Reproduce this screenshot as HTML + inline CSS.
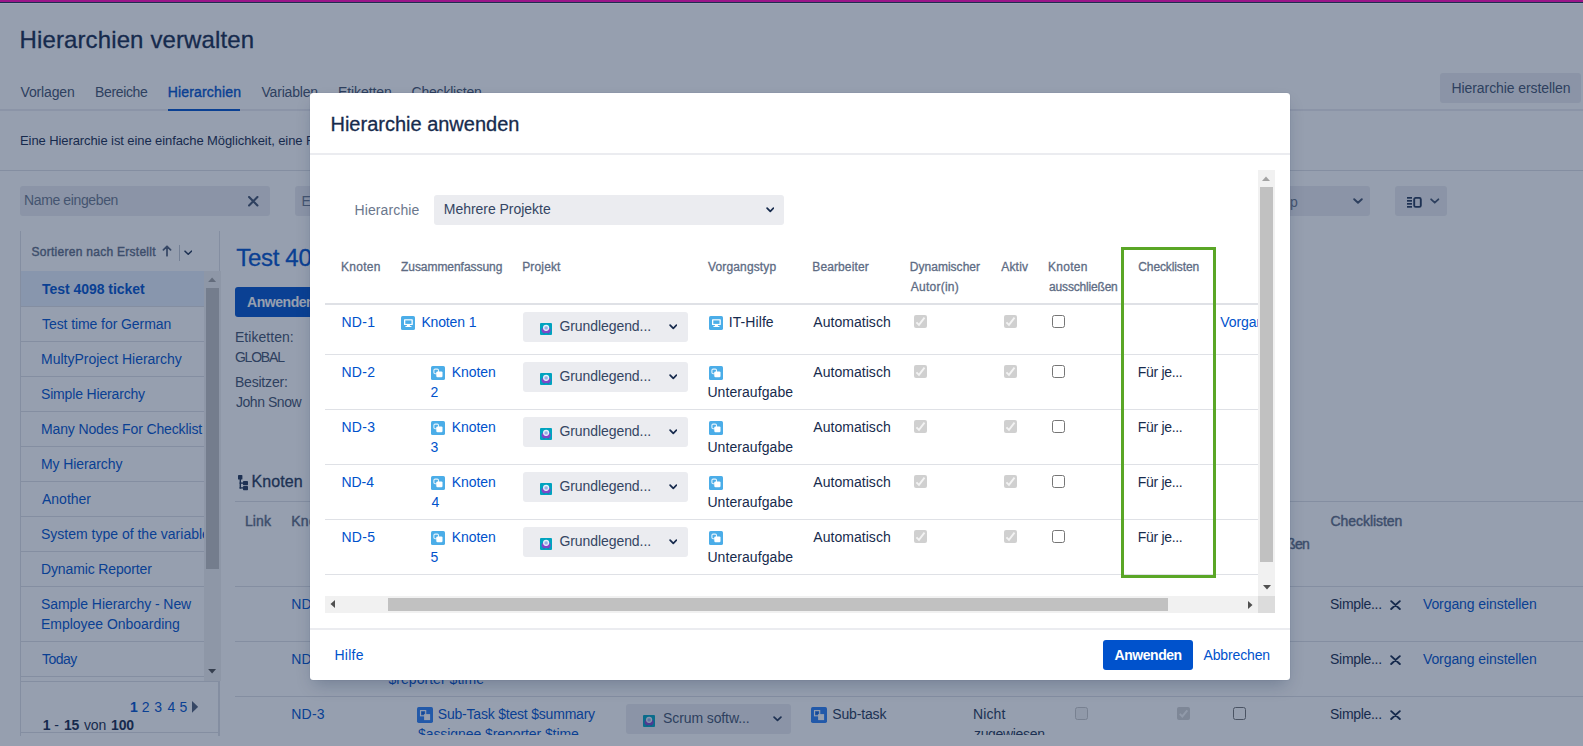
<!DOCTYPE html>
<html lang="de"><head><meta charset="utf-8"><title>Hierarchien verwalten</title>
<style>
html,body{margin:0;padding:0}
body{width:1583px;height:746px;overflow:hidden;position:relative;background:#fff;font-family:"Liberation Sans",Arial,sans-serif;}
.a{position:absolute;box-sizing:border-box}
.t{position:absolute;white-space:nowrap;line-height:20px}
.layer{position:absolute;left:0;top:0;width:1583px;height:746px;overflow:hidden}
#blanket{background:rgba(23,43,77,0.45)}
#modal{position:absolute;left:310px;top:93px;width:980px;height:587px;background:#fff;border-radius:3px;box-shadow:0 8px 16px -4px rgba(9,30,66,.25),0 0 1px rgba(9,30,66,.31)}
#mscroll{position:absolute;left:15px;top:77px;width:933px;height:426px;overflow:hidden}
</style></head><body>
<div class="layer" id="app" role="main"><span class="t" style="left:19.50px;top:30px;font-size:24px;color:#172b4d;-webkit-text-stroke:0.30px;letter-spacing:0.125px;">Hierarchien verwalten</span><span class="t" style="left:20.50px;top:82px;font-size:14px;color:#42526e;letter-spacing:-0.143px;">Vorlagen</span><span class="t" style="left:95.00px;top:82px;font-size:14px;color:#42526e;letter-spacing:-0.357px;">Bereiche</span><span class="t" style="left:167.70px;top:82px;font-size:14px;color:#0052cc;-webkit-text-stroke:0.40px;letter-spacing:0.170px;">Hierarchien</span><span class="t" style="left:261.50px;top:82px;font-size:14px;color:#42526e;letter-spacing:-0.188px;">Variablen</span><span class="t" style="left:337.90px;top:82px;font-size:14px;color:#42526e;letter-spacing:-0.062px;">Etiketten</span><span class="t" style="left:411.50px;top:82px;font-size:14px;color:#42526e;letter-spacing:-0.200px;">Checklisten</span><div class="a" style="left:0px;top:109px;width:1583px;height:2px;background:#ebecf0;"></div><div class="a" style="left:168px;top:109px;width:72px;height:2px;background:#0052cc;"></div><div class="a" style="left:1440px;top:73px;width:141px;height:30px;background:#ebecf0;border-radius:3px;"></div><span class="t" style="left:1451.50px;top:78px;font-size:14px;color:#42526e;letter-spacing:-0.079px;">Hierarchie erstellen</span><span class="t" style="left:20.00px;top:131px;font-size:13px;color:#172b4d;letter-spacing:-0.087px;">Eine Hierarchie ist eine einfache Möglichkeit, eine F</span><div class="a" style="left:0px;top:170px;width:1583px;height:1px;background:#dfe1e6;"></div><div class="a" style="left:20px;top:186px;width:250px;height:30px;background:#ebecf0;border-radius:3px;"></div><span class="t" style="left:24.00px;top:190px;font-size:14px;color:#6b778c;letter-spacing:-0.375px;">Name eingeben</span><div class="a" style="left:295px;top:186px;width:200px;height:30px;background:#ebecf0;border-radius:3px;"></div><span class="t" style="left:301.50px;top:191px;font-size:14px;color:#6b778c;">Etikett</span><div class="a" style="left:1170px;top:186px;width:200px;height:30px;background:#ebecf0;border-radius:3px;"></div><span class="t" style="left:1290.00px;top:192px;font-size:14px;color:#6b778c;">p</span><div class="a" style="left:1395px;top:186px;width:52px;height:30px;background:#ebecf0;border-radius:3px;"></div><svg class="a" style="left:248px;top:196px" width="10.5" height="10.5" viewBox="0 0 10 10"><path d="M1 1 L9 9 M9 1 L1 9" stroke="#42526e" stroke-width="2" fill="none" stroke-linecap="round"/></svg><svg class="a" style="left:1352.5px;top:198px" width="10" height="6" viewBox="0 0 10 6"><path d="M1.2 1.2 L5 4.8 L8.8 1.2" stroke="#42526e" stroke-width="1.9" fill="none" stroke-linecap="round" stroke-linejoin="round"/></svg><svg class="a" style="left:1430px;top:198px" width="9.5" height="6" viewBox="0 0 10 6"><path d="M1.2 1.2 L5 4.8 L8.8 1.2" stroke="#42526e" stroke-width="1.9" fill="none" stroke-linecap="round" stroke-linejoin="round"/></svg><svg class="a" style="left:1406.5px;top:195.5px" width="16" height="13" viewBox="0 0 16 13"><g fill="#253858"><rect x="0" y="1" width="5" height="1.7"/><rect x="0" y="4" width="5" height="1.7"/><rect x="0" y="7" width="5" height="1.7"/><rect x="0" y="10" width="5" height="1.7"/></g><rect x="7.2" y="1.9" width="6.6" height="9" rx="1.5" fill="none" stroke="#253858" stroke-width="1.9"/></svg><div class="a" style="left:20px;top:231px;width:200px;height:505px;border-left:1px solid #dfe1e6;border-right:1px solid #dfe1e6;"></div><span class="t" style="left:31.50px;top:242px;font-size:12px;color:#5e6c84;-webkit-text-stroke:0.40px;letter-spacing:0.273px;">Sortieren nach Erstellt</span><svg class="a" style="left:162px;top:245.4px" width="10" height="11.6" viewBox="0 0 10 12"><path d="M5 11 V1.5 M1.3 5 L5 1.3 L8.7 5" stroke="#505f79" stroke-width="1.8" fill="none" stroke-linecap="round" stroke-linejoin="round"/></svg><div class="a" style="left:179px;top:245px;width:1px;height:16px;background:#c1c7d0;"></div><svg class="a" style="left:183.5px;top:249.5px" width="8.5" height="5.5" viewBox="0 0 10 6"><path d="M1.2 1.2 L5 4.8 L8.8 1.2" stroke="#253858" stroke-width="1.9" fill="none" stroke-linecap="round" stroke-linejoin="round"/></svg><div class="a" style="left:21px;top:271px;width:183px;height:35px;background:#e6eefb;"></div><span class="t" style="left:42.00px;top:279px;font-size:14px;color:#0052cc;font-weight:700;letter-spacing:-0.033px;">Test 4098 ticket</span><div class="a" style="left:21px;top:306px;width:183px;height:1px;background:#dfe1e6;"></div><span class="t" style="left:42.00px;top:314px;font-size:14px;color:#0052cc;letter-spacing:-0.079px;">Test time for German</span><div class="a" style="left:21px;top:341px;width:183px;height:1px;background:#dfe1e6;"></div><span class="t" style="left:41.00px;top:349px;font-size:14px;color:#0052cc;">MultyProject Hierarchy</span><div class="a" style="left:21px;top:376px;width:183px;height:1px;background:#dfe1e6;"></div><span class="t" style="left:41.00px;top:384px;font-size:14px;color:#0052cc;letter-spacing:-0.167px;">Simple Hierarchy</span><div class="a" style="left:21px;top:411px;width:183px;height:1px;background:#dfe1e6;"></div><span class="t" style="left:41.00px;top:419px;font-size:14px;color:#0052cc;letter-spacing:-0.130px;">Many Nodes For Checklist</span><div class="a" style="left:21px;top:446px;width:183px;height:1px;background:#dfe1e6;"></div><span class="t" style="left:41.00px;top:454px;font-size:14px;color:#0052cc;letter-spacing:-0.091px;">My Hierarchy</span><div class="a" style="left:21px;top:481px;width:183px;height:1px;background:#dfe1e6;"></div><span class="t" style="left:42.00px;top:489px;font-size:14px;color:#0052cc;">Another</span><div class="a" style="left:21px;top:516px;width:183px;height:1px;background:#dfe1e6;"></div><span class="t" style="left:41.00px;top:524px;font-size:14px;color:#0052cc;">System type of the variable</span><div class="a" style="left:21px;top:551px;width:183px;height:1px;background:#dfe1e6;"></div><span class="t" style="left:41.00px;top:559px;font-size:14px;color:#0052cc;letter-spacing:-0.133px;">Dynamic Reporter</span><div class="a" style="left:21px;top:586px;width:183px;height:1px;background:#dfe1e6;"></div><span class="t" style="left:41.00px;top:594px;font-size:14px;color:#0052cc;letter-spacing:-0.071px;">Sample Hierarchy - New</span><span class="t" style="left:41.00px;top:614px;font-size:14px;color:#0052cc;letter-spacing:-0.028px;">Employee Onboarding</span><div class="a" style="left:21px;top:641px;width:183px;height:1px;background:#dfe1e6;"></div><span class="t" style="left:42.00px;top:649px;font-size:14px;color:#0052cc;letter-spacing:-0.500px;">Today</span><div class="a" style="left:21px;top:676px;width:183px;height:1px;background:#dfe1e6;"></div><div class="a" style="left:204px;top:516px;width:2px;height:35px;background:#fff;"></div><div class="a" style="left:204px;top:271px;width:16.6px;height:410px;background:#f1f1f1;"></div><div class="a" style="left:206px;top:288px;width:13px;height:281px;background:#c1c1c1;"></div><svg class="a" style="left:208.4px;top:277.4px" width="8.2" height="5" viewBox="0 0 8 5"><path d="M0 5 L4 0.5 L8 5 Z" fill="#a3a3a3"/></svg><svg class="a" style="left:208.4px;top:669.3px" width="8.2" height="5" viewBox="0 0 8 5"><path d="M0 0 L4 4.5 L8 0 Z" fill="#505050"/></svg><div class="a" style="left:20px;top:681px;width:199px;height:52px;border:1px solid #dfe1e6;"></div><div class="a" style="left:20px;top:733px;width:199px;height:3px;border-left:1px solid #dfe1e6;border-right:1px solid #dfe1e6;"></div><span class="t" style="left:130.00px;top:697px;font-size:14px;color:#0052cc;font-weight:700;">1</span><span class="t" style="left:141.80px;top:697px;font-size:14px;color:#0052cc;">2</span><span class="t" style="left:154.20px;top:697px;font-size:14px;color:#0052cc;">3</span><span class="t" style="left:167.50px;top:697px;font-size:14px;color:#0052cc;">4</span><span class="t" style="left:179.60px;top:697px;font-size:14px;color:#0052cc;">5</span><svg class="a" style="left:192px;top:701px" width="6.2" height="11.8" viewBox="0 0 6 11.5"><path d="M0 0 L6 5.75 L0 11.5 Z" fill="#505f79"/></svg><span class="t" style="left:42.70px;top:715px;font-size:14px;color:#172b4d;font-weight:700;">1</span><span class="t" style="left:54.30px;top:715px;font-size:14px;color:#172b4d;">-</span><span class="t" style="left:63.90px;top:715px;font-size:14px;color:#172b4d;font-weight:700;letter-spacing:-0.300px;">15</span><span class="t" style="left:83.90px;top:715px;font-size:14px;color:#172b4d;letter-spacing:-0.050px;">von</span><span class="t" style="left:111.00px;top:715px;font-size:14px;color:#172b4d;font-weight:700;letter-spacing:-0.100px;">100</span><span class="t" style="left:236.20px;top:248px;font-size:24px;color:#0052cc;-webkit-text-stroke:0.30px;letter-spacing:-0.3px;">Test 4098 ticket</span><div class="a" style="left:235px;top:287px;width:92px;height:30px;background:#0052cc;border-radius:3px;"></div><span class="t" style="left:247.10px;top:292px;font-size:14px;color:#fff;font-weight:700;letter-spacing:-0.471px;">Anwenden</span><span class="t" style="left:234.90px;top:327px;font-size:14px;color:#42526e;letter-spacing:0.056px;">Etiketten:</span><span class="t" style="left:234.90px;top:347px;font-size:14px;color:#42526e;letter-spacing:-1.200px;">GLOBAL</span><span class="t" style="left:234.90px;top:372px;font-size:14px;color:#42526e;letter-spacing:-0.188px;">Besitzer:</span><span class="t" style="left:235.90px;top:392px;font-size:14px;color:#42526e;letter-spacing:-0.438px;">John Snow</span><svg class="a" style="left:238px;top:475.4px" width="10" height="15.2" viewBox="0 0 10 15.2"><g fill="#253858"><rect x="0" y="0" width="4.4" height="4.6" rx="0.7"/><rect x="1.6" y="4" width="1.4" height="9.6"/><rect x="1.6" y="7.4" width="4" height="1.4"/><rect x="1.6" y="12.2" width="4" height="1.4"/><rect x="5" y="6" width="5" height="4.2" rx="0.7"/><rect x="5" y="11" width="5" height="4.2" rx="0.7"/></g></svg><span class="t" style="left:251.50px;top:472px;font-size:16px;color:#253858;-webkit-text-stroke:0.30px;letter-spacing:0.100px;">Knoten</span><div class="a" style="left:235px;top:501px;width:1348px;height:1px;background:#dfe1e6;"></div><div class="a" style="left:235px;top:586px;width:1348px;height:1px;background:#dfe1e6;"></div><div class="a" style="left:235px;top:641px;width:1348px;height:1px;background:#dfe1e6;"></div><div class="a" style="left:235px;top:696px;width:1348px;height:1px;background:#dfe1e6;"></div><span class="t" style="left:244.90px;top:511px;font-size:14px;color:#5e6c84;-webkit-text-stroke:0.44px;letter-spacing:0.167px;">Link</span><span class="t" style="left:291.20px;top:511px;font-size:14px;color:#5e6c84;-webkit-text-stroke:0.44px;letter-spacing:0.300px;">Knoten</span><span class="t" style="left:291.20px;top:594px;font-size:14px;color:#0052cc;letter-spacing:0.267px;">ND-1</span><span class="t" style="left:291.20px;top:649px;font-size:14px;color:#0052cc;letter-spacing:0.267px;">ND-2</span><span class="t" style="left:291.20px;top:704px;font-size:14px;color:#0052cc;letter-spacing:0.267px;">ND-3</span><span class="t" style="left:1330.50px;top:511px;font-size:14px;color:#5e6c84;-webkit-text-stroke:0.44px;letter-spacing:-0.050px;">Checklisten</span><span class="t" style="left:1234.90px;top:534px;font-size:14px;color:#5e6c84;-webkit-text-stroke:0.44px;letter-spacing:-0.682px;">ausschließen</span><span class="t" style="left:1330.10px;top:594px;font-size:14px;color:#172b4d;letter-spacing:-0.312px;">Simple...</span><svg class="a" style="left:1390.3px;top:599.7px" width="11" height="10.2" viewBox="0 0 12 11"><path d="M1.3 1.2 L10.7 9.8 M10.7 1.2 L1.3 9.8" stroke="#172b4d" stroke-width="2.1" fill="none" stroke-linecap="round"/></svg><span class="t" style="left:1422.90px;top:594px;font-size:14px;color:#0052cc;letter-spacing:-0.076px;">Vorgang einstellen</span><span class="t" style="left:1330.10px;top:649px;font-size:14px;color:#172b4d;letter-spacing:-0.312px;">Simple...</span><svg class="a" style="left:1390.3px;top:654.7px" width="11" height="10.2" viewBox="0 0 12 11"><path d="M1.3 1.2 L10.7 9.8 M10.7 1.2 L1.3 9.8" stroke="#172b4d" stroke-width="2.1" fill="none" stroke-linecap="round"/></svg><span class="t" style="left:1422.90px;top:649px;font-size:14px;color:#0052cc;letter-spacing:-0.076px;">Vorgang einstellen</span><span class="t" style="left:1330.10px;top:704px;font-size:14px;color:#172b4d;letter-spacing:-0.312px;">Simple...</span><svg class="a" style="left:1390.3px;top:709.7px" width="11" height="10.2" viewBox="0 0 12 11"><path d="M1.3 1.2 L10.7 9.8 M10.7 1.2 L1.3 9.8" stroke="#172b4d" stroke-width="2.1" fill="none" stroke-linecap="round"/></svg><span class="t" style="left:388.50px;top:669px;font-size:14px;color:#0052cc;letter-spacing:0.036px;">$reporter $time</span><svg class="a" style="left:417px;top:707px" width="16" height="16" viewBox="0 0 16 16"><rect width="16" height="16" rx="1.7" fill="#2d80f5"/><rect x="3.5" y="3.6" width="5.2" height="5.2" fill="#2d80f5" stroke="#fff" stroke-width="1.1"/><circle cx="6" cy="6.1" r="1.3" fill="#1c62c9"/><rect x="7.1" y="7.1" width="6" height="6" fill="#fff"/></svg><span class="t" style="left:437.80px;top:704px;font-size:14px;color:#0052cc;letter-spacing:-0.205px;">Sub-Task $test $summary</span><span class="t" style="left:418.00px;top:724px;font-size:14px;color:#0052cc;letter-spacing:-0.075px;">$assignee $reporter $time</span><div class="a" style="left:626px;top:704px;width:165px;height:30px;background:#ebecf0;border-radius:3px;"></div><svg class="a" style="left:643px;top:715px" width="12" height="12" viewBox="0 0 12 12"><rect width="12" height="12" rx="1" fill="#00a3bf"/><rect x="3.3" y="9.3" width="1.4" height="1.2" fill="#5e35a8"/><rect x="7.5" y="9.3" width="1.4" height="1.2" fill="#5e35a8"/><rect x="1.6" y="4.4" width="9" height="5.5" rx="2.75" fill="#7f48c8"/><circle cx="6.1" cy="4.8" r="3.1" fill="#eaf1fb"/><circle cx="6.1" cy="4.9" r="1.9" fill="#a9c0ec"/><rect x="5" y="4.6" width="2.2" height="0.8" fill="#7f9ad8"/></svg><span class="t" style="left:663.00px;top:708px;font-size:14px;color:#42526e;letter-spacing:-0.100px;">Scrum softw...</span><svg class="a" style="left:773px;top:716px" width="9" height="5.6" viewBox="0 0 10 6"><path d="M1.2 1.2 L5 4.8 L8.8 1.2" stroke="#253858" stroke-width="1.9" fill="none" stroke-linecap="round" stroke-linejoin="round"/></svg><svg class="a" style="left:811px;top:707px" width="16" height="16" viewBox="0 0 16 16"><rect width="16" height="16" rx="1.7" fill="#2d80f5"/><rect x="3.5" y="3.6" width="5.2" height="5.2" fill="#2d80f5" stroke="#fff" stroke-width="1.1"/><circle cx="6" cy="6.1" r="1.3" fill="#1c62c9"/><rect x="7.1" y="7.1" width="6" height="6" fill="#fff"/></svg><span class="t" style="left:832.20px;top:704px;font-size:14px;color:#253858;letter-spacing:-0.143px;">Sub-task</span><span class="t" style="left:973.00px;top:704px;font-size:14px;color:#253858;letter-spacing:0.125px;">Nicht</span><span class="t" style="left:974.00px;top:724px;font-size:14px;color:#253858;letter-spacing:-0.333px;">zugewiesen</span><div class="a" style="left:1075px;top:707px;width:13px;height:13px;border:1px solid #c8c8c8;border-radius:2.5px;background:#f4f4f4"></div><svg class="a" style="left:1177px;top:707px" width="13" height="13" viewBox="0 0 13 13"><rect width="13" height="13" rx="2" fill="#d3d3d3"/><path d="M2.8 6.9 L5.3 9.4 L10.3 3.4" stroke="#f6f6f6" stroke-width="2" fill="none"/></svg><div class="a" style="left:1233px;top:707px;width:13px;height:13px;border:1px solid #767676;border-radius:2.5px;background:#fff"></div><div class="a" style="left:220px;top:735px;width:1363px;height:11px;background:#fff;"></div><div class="a" style="left:0px;top:736px;width:20px;height:10px;background:#fff;"></div></div>
<div class="layer" id="blanket"></div>
<div id="modal" role="dialog" aria-label="Hierarchie anwenden"><span class="t" style="left:20.50px;top:21px;font-size:20px;color:#172b4d;-webkit-text-stroke:0.30px;letter-spacing:-0.006px;">Hierarchie anwenden</span><div class="a" style="left:0px;top:60px;width:980px;height:2px;background:#ebecf0;"></div><div class="a" style="left:0px;top:535px;width:980px;height:2px;background:#ebecf0;"></div><span class="t" style="left:24.50px;top:552px;font-size:14px;color:#0052cc;letter-spacing:0.250px;">Hilfe</span><div class="a" style="left:793px;top:547px;width:90px;height:30px;background:#0052cc;border-radius:3px;"></div><span class="t" style="left:804.60px;top:552px;font-size:14px;color:#fff;font-weight:700;letter-spacing:-0.471px;">Anwenden</span><span class="t" style="left:893.50px;top:552px;font-size:14px;color:#0052cc;letter-spacing:-0.137px;">Abbrechen</span><div class="a" style="left:948px;top:77px;width:17px;height:426px;background:#f1f1f1;"></div><div class="a" style="left:950px;top:94px;width:13px;height:375px;background:#c1c1c1;"></div><svg class="a" style="left:952.2px;top:82.7px" width="8" height="5" viewBox="0 0 8 5"><path d="M0 5 L4 0.5 L8 5 Z" fill="#a3a3a3"/></svg><svg class="a" style="left:952.5px;top:491.5px" width="8" height="5" viewBox="0 0 8 5"><path d="M0 0 L4 4.5 L8 0 Z" fill="#505050"/></svg><div class="a" style="left:15px;top:503px;width:933px;height:17px;background:#f1f1f1;"></div><div class="a" style="left:948px;top:503px;width:17px;height:17px;background:#dcdcdc;"></div><div class="a" style="left:78px;top:505px;width:780px;height:13px;background:#c1c1c1;"></div><svg class="a" style="left:19.8px;top:507.3px" width="5" height="8" viewBox="0 0 5 8"><path d="M5 0 L0.5 4 L5 8 Z" fill="#505050"/></svg><svg class="a" style="left:937.5px;top:507.5px" width="5" height="8" viewBox="0 0 5 8"><path d="M0 0 L4.5 4 L0 8 Z" fill="#505050"/></svg><div id="mscroll"><span class="t" style="left:29.40px;top:30px;font-size:14px;color:#6b778c;letter-spacing:0.133px;">Hierarchie</span><div class="a" style="left:109px;top:25px;width:350px;height:30px;background:#ebecf0;border-radius:3px;"></div><span class="t" style="left:118.80px;top:29px;font-size:14px;color:#344563;letter-spacing:-0.033px;">Mehrere Projekte</span><svg class="a" style="left:440.7px;top:37.2px" width="8.6" height="5.6" viewBox="0 0 8.6 5.6"><path d="M1.1 1.1 L4.3 4.3 L7.5 1.1" stroke="#172b4d" stroke-width="1.75" fill="none" stroke-linecap="round" stroke-linejoin="round"/></svg><span class="t" style="left:15.90px;top:87px;font-size:12px;color:#5e6c84;-webkit-text-stroke:0.30px;letter-spacing:0.300px;">Knoten</span><span class="t" style="left:76.00px;top:87px;font-size:12px;color:#5e6c84;-webkit-text-stroke:0.30px;letter-spacing:-0.050px;">Zusammenfassung</span><span class="t" style="left:197.20px;top:87px;font-size:12px;color:#5e6c84;-webkit-text-stroke:0.30px;letter-spacing:0.150px;">Projekt</span><span class="t" style="left:383.10px;top:87px;font-size:12px;color:#5e6c84;-webkit-text-stroke:0.30px;letter-spacing:0.130px;">Vorgangstyp</span><span class="t" style="left:487.30px;top:87px;font-size:12px;color:#5e6c84;-webkit-text-stroke:0.30px;letter-spacing:0.111px;">Bearbeiter</span><span class="t" style="left:584.80px;top:87px;font-size:12px;color:#5e6c84;-webkit-text-stroke:0.30px;letter-spacing:0.020px;">Dynamischer</span><span class="t" style="left:676.20px;top:87px;font-size:12px;color:#5e6c84;-webkit-text-stroke:0.30px;letter-spacing:0.200px;">Aktiv</span><span class="t" style="left:723.10px;top:87px;font-size:12px;color:#5e6c84;-webkit-text-stroke:0.30px;letter-spacing:0.240px;">Knoten</span><span class="t" style="left:813.30px;top:87px;font-size:12px;color:#5e6c84;-webkit-text-stroke:0.30px;letter-spacing:-0.110px;">Checklisten</span><span class="t" style="left:585.80px;top:107px;font-size:12px;color:#5e6c84;-webkit-text-stroke:0.30px;letter-spacing:0.237px;">Autor(in)</span><span class="t" style="left:724.10px;top:107px;font-size:12px;color:#5e6c84;-webkit-text-stroke:0.30px;letter-spacing:-0.182px;">ausschließen</span><div class="a" style="left:0px;top:133px;width:940px;height:2px;background:#dfe1e6;"></div><span class="t" style="left:16.40px;top:142px;font-size:14px;color:#0052cc;letter-spacing:0.300px;">ND-1</span><svg class="a" style="left:76px;top:146px" width="14" height="14" viewBox="0 0 14 14"><rect width="14" height="14" rx="1.6" fill="#4bade8"/><rect x="3" y="3.3" width="8.8" height="5.8" rx="0.6" fill="#fff"/><rect x="4.3" y="4.4" width="6.2" height="3.5" fill="#4bade8"/><rect x="5.9" y="9" width="3" height="1.1" fill="#fff"/><rect x="4.4" y="10" width="6.1" height="1.1" rx="0.3" fill="#fff"/></svg><span class="t" style="left:96.40px;top:142px;font-size:14px;color:#0052cc;letter-spacing:-0.143px;">Knoten 1</span><svg class="a" style="left:384px;top:146px" width="14" height="14" viewBox="0 0 14 14"><rect width="14" height="14" rx="1.6" fill="#4bade8"/><rect x="3" y="3.3" width="8.8" height="5.8" rx="0.6" fill="#fff"/><rect x="4.3" y="4.4" width="6.2" height="3.5" fill="#4bade8"/><rect x="5.9" y="9" width="3" height="1.1" fill="#fff"/><rect x="4.4" y="10" width="6.1" height="1.1" rx="0.3" fill="#fff"/></svg><span class="t" style="left:403.80px;top:142px;font-size:14px;color:#172b4d;letter-spacing:0.071px;">IT-Hilfe</span><span class="t" style="left:895.30px;top:142px;font-size:14px;color:#0052cc;letter-spacing:-0.076px;">Vorgang einstellen</span><div class="a" style="left:198px;top:142px;width:165px;height:30px;background:#ebecf0;border-radius:3px;"></div><svg class="a" style="left:215px;top:153px" width="12" height="12" viewBox="0 0 12 12"><rect width="12" height="12" rx="1" fill="#00a3bf"/><rect x="3.3" y="9.3" width="1.4" height="1.2" fill="#5e35a8"/><rect x="7.5" y="9.3" width="1.4" height="1.2" fill="#5e35a8"/><rect x="1.6" y="4.4" width="9" height="5.5" rx="2.75" fill="#7f48c8"/><circle cx="6.1" cy="4.8" r="3.1" fill="#eaf1fb"/><circle cx="6.1" cy="4.9" r="1.9" fill="#a9c0ec"/><rect x="5" y="4.6" width="2.2" height="0.8" fill="#7f9ad8"/></svg><span class="t" style="left:234.40px;top:146px;font-size:14px;color:#344563;letter-spacing:-0.069px;">Grundlegend...</span><svg class="a" style="left:343.8px;top:154px" width="8.6" height="5.6" viewBox="0 0 8.6 5.6"><path d="M1.1 1.1 L4.3 4.3 L7.5 1.1" stroke="#172b4d" stroke-width="1.75" fill="none" stroke-linecap="round" stroke-linejoin="round"/></svg><span class="t" style="left:488.30px;top:142px;font-size:14px;color:#172b4d;letter-spacing:0.040px;">Automatisch</span><svg class="a" style="left:589px;top:145px" width="13" height="13" viewBox="0 0 13 13"><rect width="13" height="13" rx="2" fill="#d0d0d0"/><path d="M2.4 7.4 L5 9.9 L10.5 2.7" stroke="#f3f3f3" stroke-width="1.9" fill="none"/></svg><svg class="a" style="left:679px;top:145px" width="13" height="13" viewBox="0 0 13 13"><rect width="13" height="13" rx="2" fill="#d0d0d0"/><path d="M2.4 7.4 L5 9.9 L10.5 2.7" stroke="#f3f3f3" stroke-width="1.9" fill="none"/></svg><div class="a" style="left:727px;top:145px;width:13px;height:13px;border:1px solid #767676;border-radius:2.5px;background:#fff"></div><div class="a" style="left:0px;top:184px;width:940px;height:1px;background:#dfe1e6;"></div><span class="t" style="left:16.40px;top:192px;font-size:14px;color:#0052cc;letter-spacing:0.300px;">ND-2</span><svg class="a" style="left:106px;top:196px" width="14" height="14" viewBox="0 0 14 14"><rect width="14" height="14" rx="1.6" fill="#4bade8"/><rect x="2.9" y="3.1" width="4.6" height="4.6" rx="1.2" fill="none" stroke="#fff" stroke-width="1.1" opacity=".85"/><rect x="5.3" y="5.4" width="6.2" height="5.9" rx="1.2" fill="#fff"/></svg><span class="t" style="left:126.70px;top:192px;font-size:14px;color:#0052cc;letter-spacing:-0.040px;">Knoten</span><span class="t" style="left:105.50px;top:212px;font-size:14px;color:#0052cc;">2</span><svg class="a" style="left:384px;top:196px" width="14" height="14" viewBox="0 0 14 14"><rect width="14" height="14" rx="1.6" fill="#4bade8"/><rect x="2.9" y="3.1" width="4.6" height="4.6" rx="1.2" fill="none" stroke="#fff" stroke-width="1.1" opacity=".85"/><rect x="5.3" y="5.4" width="6.2" height="5.9" rx="1.2" fill="#fff"/></svg><span class="t" style="left:382.40px;top:212px;font-size:14px;color:#172b4d;letter-spacing:0.073px;">Unteraufgabe</span><span class="t" style="left:812.80px;top:192px;font-size:14px;color:#172b4d;letter-spacing:-0.312px;">Für je...</span><div class="a" style="left:198px;top:192px;width:165px;height:30px;background:#ebecf0;border-radius:3px;"></div><svg class="a" style="left:215px;top:203px" width="12" height="12" viewBox="0 0 12 12"><rect width="12" height="12" rx="1" fill="#00a3bf"/><rect x="3.3" y="9.3" width="1.4" height="1.2" fill="#5e35a8"/><rect x="7.5" y="9.3" width="1.4" height="1.2" fill="#5e35a8"/><rect x="1.6" y="4.4" width="9" height="5.5" rx="2.75" fill="#7f48c8"/><circle cx="6.1" cy="4.8" r="3.1" fill="#eaf1fb"/><circle cx="6.1" cy="4.9" r="1.9" fill="#a9c0ec"/><rect x="5" y="4.6" width="2.2" height="0.8" fill="#7f9ad8"/></svg><span class="t" style="left:234.40px;top:196px;font-size:14px;color:#344563;letter-spacing:-0.069px;">Grundlegend...</span><svg class="a" style="left:343.8px;top:204px" width="8.6" height="5.6" viewBox="0 0 8.6 5.6"><path d="M1.1 1.1 L4.3 4.3 L7.5 1.1" stroke="#172b4d" stroke-width="1.75" fill="none" stroke-linecap="round" stroke-linejoin="round"/></svg><span class="t" style="left:488.30px;top:192px;font-size:14px;color:#172b4d;letter-spacing:0.040px;">Automatisch</span><svg class="a" style="left:589px;top:195px" width="13" height="13" viewBox="0 0 13 13"><rect width="13" height="13" rx="2" fill="#d0d0d0"/><path d="M2.4 7.4 L5 9.9 L10.5 2.7" stroke="#f3f3f3" stroke-width="1.9" fill="none"/></svg><svg class="a" style="left:679px;top:195px" width="13" height="13" viewBox="0 0 13 13"><rect width="13" height="13" rx="2" fill="#d0d0d0"/><path d="M2.4 7.4 L5 9.9 L10.5 2.7" stroke="#f3f3f3" stroke-width="1.9" fill="none"/></svg><div class="a" style="left:727px;top:195px;width:13px;height:13px;border:1px solid #767676;border-radius:2.5px;background:#fff"></div><div class="a" style="left:0px;top:239px;width:940px;height:1px;background:#dfe1e6;"></div><span class="t" style="left:16.40px;top:247px;font-size:14px;color:#0052cc;letter-spacing:0.300px;">ND-3</span><svg class="a" style="left:106px;top:251px" width="14" height="14" viewBox="0 0 14 14"><rect width="14" height="14" rx="1.6" fill="#4bade8"/><rect x="2.9" y="3.1" width="4.6" height="4.6" rx="1.2" fill="none" stroke="#fff" stroke-width="1.1" opacity=".85"/><rect x="5.3" y="5.4" width="6.2" height="5.9" rx="1.2" fill="#fff"/></svg><span class="t" style="left:126.70px;top:247px;font-size:14px;color:#0052cc;letter-spacing:-0.040px;">Knoten</span><span class="t" style="left:105.50px;top:267px;font-size:14px;color:#0052cc;">3</span><svg class="a" style="left:384px;top:251px" width="14" height="14" viewBox="0 0 14 14"><rect width="14" height="14" rx="1.6" fill="#4bade8"/><rect x="2.9" y="3.1" width="4.6" height="4.6" rx="1.2" fill="none" stroke="#fff" stroke-width="1.1" opacity=".85"/><rect x="5.3" y="5.4" width="6.2" height="5.9" rx="1.2" fill="#fff"/></svg><span class="t" style="left:382.40px;top:267px;font-size:14px;color:#172b4d;letter-spacing:0.073px;">Unteraufgabe</span><span class="t" style="left:812.80px;top:247px;font-size:14px;color:#172b4d;letter-spacing:-0.312px;">Für je...</span><div class="a" style="left:198px;top:247px;width:165px;height:30px;background:#ebecf0;border-radius:3px;"></div><svg class="a" style="left:215px;top:258px" width="12" height="12" viewBox="0 0 12 12"><rect width="12" height="12" rx="1" fill="#00a3bf"/><rect x="3.3" y="9.3" width="1.4" height="1.2" fill="#5e35a8"/><rect x="7.5" y="9.3" width="1.4" height="1.2" fill="#5e35a8"/><rect x="1.6" y="4.4" width="9" height="5.5" rx="2.75" fill="#7f48c8"/><circle cx="6.1" cy="4.8" r="3.1" fill="#eaf1fb"/><circle cx="6.1" cy="4.9" r="1.9" fill="#a9c0ec"/><rect x="5" y="4.6" width="2.2" height="0.8" fill="#7f9ad8"/></svg><span class="t" style="left:234.40px;top:251px;font-size:14px;color:#344563;letter-spacing:-0.069px;">Grundlegend...</span><svg class="a" style="left:343.8px;top:259px" width="8.6" height="5.6" viewBox="0 0 8.6 5.6"><path d="M1.1 1.1 L4.3 4.3 L7.5 1.1" stroke="#172b4d" stroke-width="1.75" fill="none" stroke-linecap="round" stroke-linejoin="round"/></svg><span class="t" style="left:488.30px;top:247px;font-size:14px;color:#172b4d;letter-spacing:0.040px;">Automatisch</span><svg class="a" style="left:589px;top:250px" width="13" height="13" viewBox="0 0 13 13"><rect width="13" height="13" rx="2" fill="#d0d0d0"/><path d="M2.4 7.4 L5 9.9 L10.5 2.7" stroke="#f3f3f3" stroke-width="1.9" fill="none"/></svg><svg class="a" style="left:679px;top:250px" width="13" height="13" viewBox="0 0 13 13"><rect width="13" height="13" rx="2" fill="#d0d0d0"/><path d="M2.4 7.4 L5 9.9 L10.5 2.7" stroke="#f3f3f3" stroke-width="1.9" fill="none"/></svg><div class="a" style="left:727px;top:250px;width:13px;height:13px;border:1px solid #767676;border-radius:2.5px;background:#fff"></div><div class="a" style="left:0px;top:294px;width:940px;height:1px;background:#dfe1e6;"></div><span class="t" style="left:16.40px;top:302px;font-size:14px;color:#0052cc;letter-spacing:-0.033px;">ND-4</span><svg class="a" style="left:106px;top:306px" width="14" height="14" viewBox="0 0 14 14"><rect width="14" height="14" rx="1.6" fill="#4bade8"/><rect x="2.9" y="3.1" width="4.6" height="4.6" rx="1.2" fill="none" stroke="#fff" stroke-width="1.1" opacity=".85"/><rect x="5.3" y="5.4" width="6.2" height="5.9" rx="1.2" fill="#fff"/></svg><span class="t" style="left:126.70px;top:302px;font-size:14px;color:#0052cc;letter-spacing:-0.040px;">Knoten</span><span class="t" style="left:106.50px;top:322px;font-size:14px;color:#0052cc;">4</span><svg class="a" style="left:384px;top:306px" width="14" height="14" viewBox="0 0 14 14"><rect width="14" height="14" rx="1.6" fill="#4bade8"/><rect x="2.9" y="3.1" width="4.6" height="4.6" rx="1.2" fill="none" stroke="#fff" stroke-width="1.1" opacity=".85"/><rect x="5.3" y="5.4" width="6.2" height="5.9" rx="1.2" fill="#fff"/></svg><span class="t" style="left:382.40px;top:322px;font-size:14px;color:#172b4d;letter-spacing:0.073px;">Unteraufgabe</span><span class="t" style="left:812.80px;top:302px;font-size:14px;color:#172b4d;letter-spacing:-0.312px;">Für je...</span><div class="a" style="left:198px;top:302px;width:165px;height:30px;background:#ebecf0;border-radius:3px;"></div><svg class="a" style="left:215px;top:313px" width="12" height="12" viewBox="0 0 12 12"><rect width="12" height="12" rx="1" fill="#00a3bf"/><rect x="3.3" y="9.3" width="1.4" height="1.2" fill="#5e35a8"/><rect x="7.5" y="9.3" width="1.4" height="1.2" fill="#5e35a8"/><rect x="1.6" y="4.4" width="9" height="5.5" rx="2.75" fill="#7f48c8"/><circle cx="6.1" cy="4.8" r="3.1" fill="#eaf1fb"/><circle cx="6.1" cy="4.9" r="1.9" fill="#a9c0ec"/><rect x="5" y="4.6" width="2.2" height="0.8" fill="#7f9ad8"/></svg><span class="t" style="left:234.40px;top:306px;font-size:14px;color:#344563;letter-spacing:-0.069px;">Grundlegend...</span><svg class="a" style="left:343.8px;top:314px" width="8.6" height="5.6" viewBox="0 0 8.6 5.6"><path d="M1.1 1.1 L4.3 4.3 L7.5 1.1" stroke="#172b4d" stroke-width="1.75" fill="none" stroke-linecap="round" stroke-linejoin="round"/></svg><span class="t" style="left:488.30px;top:302px;font-size:14px;color:#172b4d;letter-spacing:0.040px;">Automatisch</span><svg class="a" style="left:589px;top:305px" width="13" height="13" viewBox="0 0 13 13"><rect width="13" height="13" rx="2" fill="#d0d0d0"/><path d="M2.4 7.4 L5 9.9 L10.5 2.7" stroke="#f3f3f3" stroke-width="1.9" fill="none"/></svg><svg class="a" style="left:679px;top:305px" width="13" height="13" viewBox="0 0 13 13"><rect width="13" height="13" rx="2" fill="#d0d0d0"/><path d="M2.4 7.4 L5 9.9 L10.5 2.7" stroke="#f3f3f3" stroke-width="1.9" fill="none"/></svg><div class="a" style="left:727px;top:305px;width:13px;height:13px;border:1px solid #767676;border-radius:2.5px;background:#fff"></div><div class="a" style="left:0px;top:349px;width:940px;height:1px;background:#dfe1e6;"></div><span class="t" style="left:16.40px;top:357px;font-size:14px;color:#0052cc;letter-spacing:0.300px;">ND-5</span><svg class="a" style="left:106px;top:361px" width="14" height="14" viewBox="0 0 14 14"><rect width="14" height="14" rx="1.6" fill="#4bade8"/><rect x="2.9" y="3.1" width="4.6" height="4.6" rx="1.2" fill="none" stroke="#fff" stroke-width="1.1" opacity=".85"/><rect x="5.3" y="5.4" width="6.2" height="5.9" rx="1.2" fill="#fff"/></svg><span class="t" style="left:126.70px;top:357px;font-size:14px;color:#0052cc;letter-spacing:-0.040px;">Knoten</span><span class="t" style="left:105.50px;top:377px;font-size:14px;color:#0052cc;">5</span><svg class="a" style="left:384px;top:361px" width="14" height="14" viewBox="0 0 14 14"><rect width="14" height="14" rx="1.6" fill="#4bade8"/><rect x="2.9" y="3.1" width="4.6" height="4.6" rx="1.2" fill="none" stroke="#fff" stroke-width="1.1" opacity=".85"/><rect x="5.3" y="5.4" width="6.2" height="5.9" rx="1.2" fill="#fff"/></svg><span class="t" style="left:382.40px;top:377px;font-size:14px;color:#172b4d;letter-spacing:0.073px;">Unteraufgabe</span><span class="t" style="left:812.80px;top:357px;font-size:14px;color:#172b4d;letter-spacing:-0.312px;">Für je...</span><div class="a" style="left:198px;top:357px;width:165px;height:30px;background:#ebecf0;border-radius:3px;"></div><svg class="a" style="left:215px;top:368px" width="12" height="12" viewBox="0 0 12 12"><rect width="12" height="12" rx="1" fill="#00a3bf"/><rect x="3.3" y="9.3" width="1.4" height="1.2" fill="#5e35a8"/><rect x="7.5" y="9.3" width="1.4" height="1.2" fill="#5e35a8"/><rect x="1.6" y="4.4" width="9" height="5.5" rx="2.75" fill="#7f48c8"/><circle cx="6.1" cy="4.8" r="3.1" fill="#eaf1fb"/><circle cx="6.1" cy="4.9" r="1.9" fill="#a9c0ec"/><rect x="5" y="4.6" width="2.2" height="0.8" fill="#7f9ad8"/></svg><span class="t" style="left:234.40px;top:361px;font-size:14px;color:#344563;letter-spacing:-0.069px;">Grundlegend...</span><svg class="a" style="left:343.8px;top:369px" width="8.6" height="5.6" viewBox="0 0 8.6 5.6"><path d="M1.1 1.1 L4.3 4.3 L7.5 1.1" stroke="#172b4d" stroke-width="1.75" fill="none" stroke-linecap="round" stroke-linejoin="round"/></svg><span class="t" style="left:488.30px;top:357px;font-size:14px;color:#172b4d;letter-spacing:0.040px;">Automatisch</span><svg class="a" style="left:589px;top:360px" width="13" height="13" viewBox="0 0 13 13"><rect width="13" height="13" rx="2" fill="#d0d0d0"/><path d="M2.4 7.4 L5 9.9 L10.5 2.7" stroke="#f3f3f3" stroke-width="1.9" fill="none"/></svg><svg class="a" style="left:679px;top:360px" width="13" height="13" viewBox="0 0 13 13"><rect width="13" height="13" rx="2" fill="#d0d0d0"/><path d="M2.4 7.4 L5 9.9 L10.5 2.7" stroke="#f3f3f3" stroke-width="1.9" fill="none"/></svg><div class="a" style="left:727px;top:360px;width:13px;height:13px;border:1px solid #767676;border-radius:2.5px;background:#fff"></div><div class="a" style="left:0px;top:404px;width:940px;height:1px;background:#dfe1e6;"></div><div class="a" style="left:796px;top:77px;width:95px;height:331px;border:3px solid #5aa626;"></div></div></div>
<div class="layer" id="topbar" style="height:4px"><div class="a" style="left:0px;top:0px;width:1583px;height:2px;background:#9b1589;"></div><div class="a" style="left:0px;top:2px;width:1583px;height:1px;background:#1e2d50;"></div><div class="a" style="left:0px;top:3px;width:1583px;height:1px;background:#9ea6b7;"></div></div>
</body></html>
